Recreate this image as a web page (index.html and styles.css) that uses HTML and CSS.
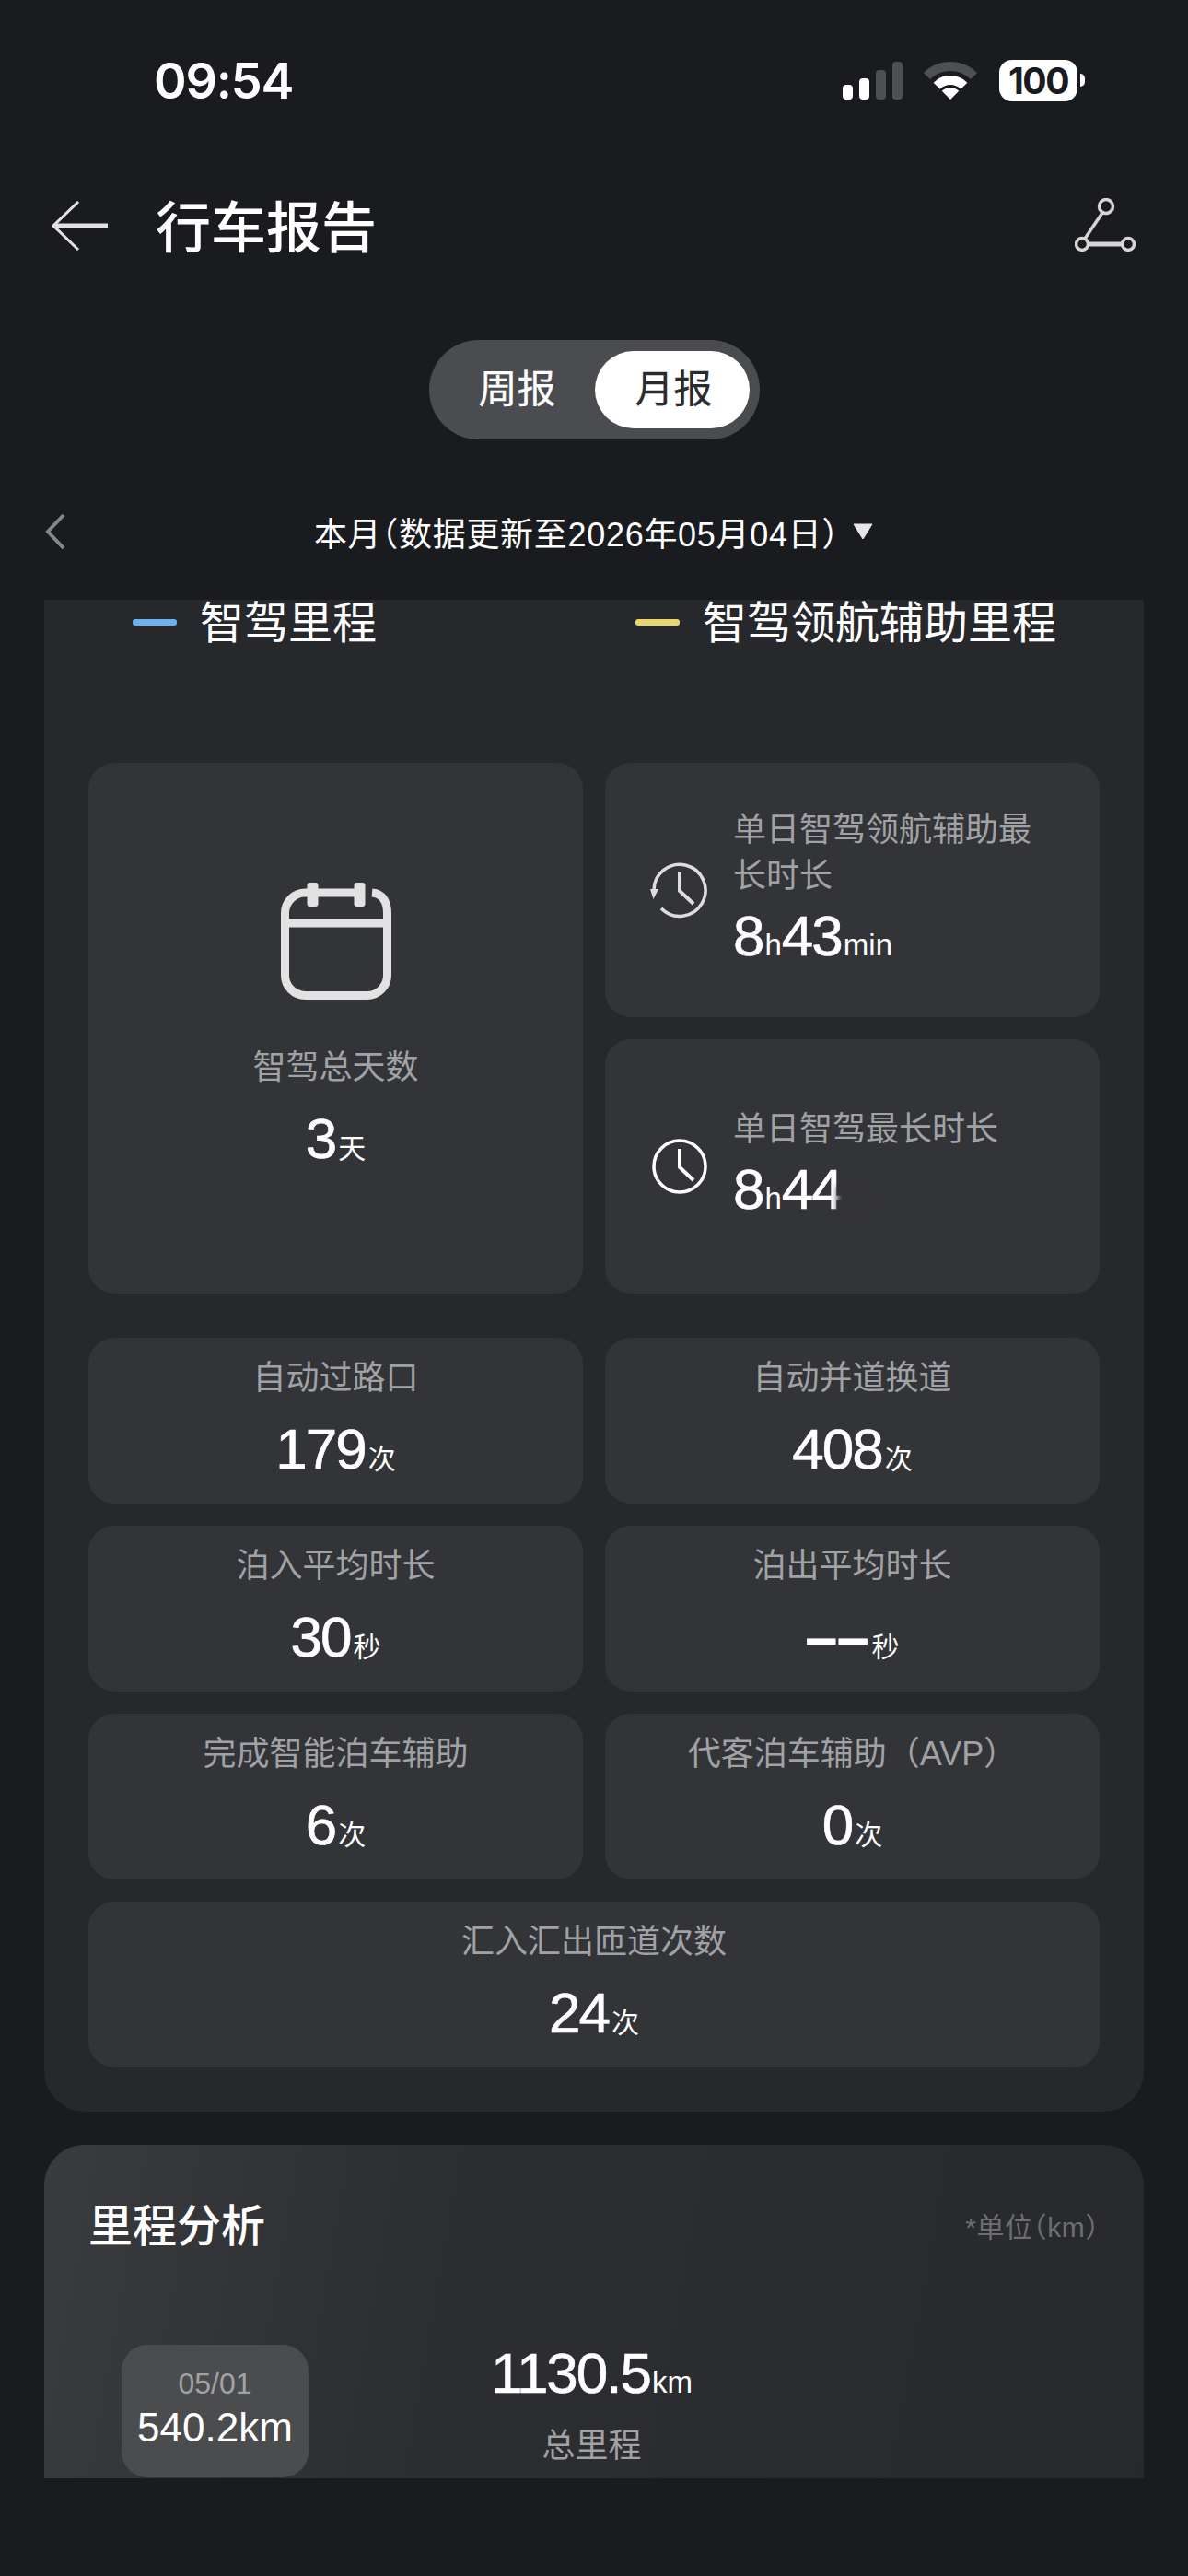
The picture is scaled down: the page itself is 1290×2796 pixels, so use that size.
FILE: index.html
```html
<!DOCTYPE html>
<html lang="zh-CN">

<head>
    <meta charset="UTF-8">
    <meta name="viewport" content="width=device-width, initial-scale=1.0">
    <title>行车报告</title>
    <link rel="stylesheet" href="styles.css">
</head>

<body>
    <!-- Status bar -->
    <div class="status-bar">
        <span class="time">09:54</span>
        <div class="status-icons">
            <div class="signal">
                <span class="bar bar-1"></span>
                <span class="bar bar-2"></span>
                <span class="bar bar-3"></span>
                <span class="bar bar-4"></span>
            </div>
            <svg class="wifi" viewBox="0 0 60 42" width="60" height="42">
                <path d="M4.5 16.5 A36 36 0 0 1 55.5 16.5" fill="none" stroke="#4f5054" stroke-width="10" />
                <path d="M15.2 27.2 A21 21 0 0 1 44.8 27.2" fill="none" stroke="#fff" stroke-width="10" />
                <path d="M30 42 L20.8 32.8 A13 13 0 0 1 39.2 32.8 Z" fill="#fff" />
            </svg>
            <div class="battery">
                <span class="battery-level">100</span>
                <span class="battery-cap"></span>
            </div>
        </div>
    </div>

    <!-- Nav -->
    <nav class="nav-bar">
        <svg class="back-icon" viewBox="0 0 62 54" width="62" height="54">
            <path d="M3 27 H61" stroke="#e2e2e2" stroke-width="5" fill="none" />
            <path d="M29 1 L2 27 L29 53" stroke="#e2e2e2" stroke-width="3" fill="none" />
        </svg>
        <h1 class="page-title">行车报告</h1>
        <svg class="route-icon" viewBox="0 0 66 60" width="66" height="60">
            <circle cx="34" cy="9" r="7.5" fill="none" stroke="#d6d6d6" stroke-width="3.5" />
            <circle cx="8" cy="50" r="6.5" fill="none" stroke="#d6d6d6" stroke-width="3.5" />
            <circle cx="58" cy="50" r="6.5" fill="none" stroke="#d6d6d6" stroke-width="3.5" />
            <path d="M30 16 L11 44" stroke="#d6d6d6" stroke-width="3.5" fill="none" />
            <path d="M15 50 H51" stroke="#d6d6d6" stroke-width="5" fill="none" />
        </svg>
    </nav>

    <!-- Week / month switch -->
    <div class="tabs">
        <span class="tab">周报</span>
        <span class="tab tab-active">月报</span>
    </div>

    <!-- Date row -->
    <div class="date-row">
        <svg class="date-prev" viewBox="0 0 24 40" width="24" height="40">
            <path d="M21 2 L4 20 L21 38" stroke="#85868a" stroke-width="4" fill="none" />
        </svg>
        <div class="date-picker">
            <span class="date-text">本月（数据更新至2026年05月04日）</span>
            <svg class="date-caret" viewBox="0 0 24 18" width="24" height="18">
                <path d="M2 1 H22 L12 17 Z" fill="#e6e6e6" stroke="#e6e6e6" stroke-width="1" stroke-linejoin="round" />
            </svg>
        </div>
    </div>

    <!-- Scrolling content -->
    <main class="content">
        <section class="card card-stats">
            <div class="legend">
                <div class="legend-item"><span class="legend-bar legend-blue"></span>智驾里程</div>
                <div class="legend-item"><span class="legend-bar legend-yellow"></span>智驾领航辅助里程</div>
            </div>

            <div class="summary-grid">
                <div class="tile tile-days">
                    <svg class="calendar-icon" viewBox="0 0 120 127" width="120" height="127">
                        <path d="M99 11 C110 12 115.5 20 115.5 33 V100 A22 22 0 0 1 93.5 122.5 H26.5 A22 22 0 0 1 4.5 100.5 V33 A22 22 0 0 1 26.5 11 H85" fill="none" stroke="#e2e2e2" stroke-width="9" />
                        <path d="M4.5 44 H115.5" stroke="#e2e2e2" stroke-width="9" fill="none" />
                        <rect x="28.5" y="0" width="12" height="26" rx="3" fill="#e2e2e2" />
                        <rect x="79.5" y="0" width="12" height="26" rx="3" fill="#e2e2e2" />
                    </svg>
                    <div class="tile-label">智驾总天数</div>
                    <div class="value">3<span class="unit">天</span></div>
                </div>

                <div class="tile tile-clock">
                    <svg class="clock-icon" viewBox="0 0 64 64" width="64" height="64">
                        <path d="M4 33 A28 28 0 1 1 12 52" fill="none" stroke="#dedede" stroke-width="3.5" />
                        <path d="M0 31 H9 L3.5 42 Z" fill="#dedede" />
                        <path d="M32 13 V33 L47 47" fill="none" stroke="#dedede" stroke-width="4" />
                    </svg>
                    <div class="clock-text">
                        <div class="tile-label">单日智驾领航辅助最长时长</div>
                        <div class="value">8<span class="unit unit-en">h</span>43<span class="unit unit-en">min</span></div>
                    </div>
                </div>

                <div class="tile tile-clock">
                    <svg class="clock-icon" viewBox="0 0 64 64" width="64" height="64">
                        <circle cx="32" cy="32" r="28" fill="none" stroke="#fff" stroke-width="3.5" />
                        <path d="M32 13 V33 L47 47" fill="none" stroke="#fff" stroke-width="4" />
                    </svg>
                    <div class="clock-text">
                        <div class="tile-label">单日智驾最长时长</div>
                        <div class="value">8<span class="unit unit-en">h</span>44</div>
                    </div>
                    <span class="smudge"></span>
                </div>
            </div>

            <div class="stats-grid">
                <div class="tile tile-stat">
                    <div class="tile-label">自动过路口</div>
                    <div class="value">179<span class="unit">次</span></div>
                </div>
                <div class="tile tile-stat">
                    <div class="tile-label">自动并道换道</div>
                    <div class="value">408<span class="unit">次</span></div>
                </div>
                <div class="tile tile-stat">
                    <div class="tile-label">泊入平均时长</div>
                    <div class="value">30<span class="unit">秒</span></div>
                </div>
                <div class="tile tile-stat">
                    <div class="tile-label">泊出平均时长</div>
                    <div class="value"><span class="dash">––</span><span class="unit">秒</span></div>
                </div>
                <div class="tile tile-stat">
                    <div class="tile-label">完成智能泊车辅助</div>
                    <div class="value">6<span class="unit">次</span></div>
                </div>
                <div class="tile tile-stat">
                    <div class="tile-label">代客泊车辅助（AVP）</div>
                    <div class="value">0<span class="unit">次</span></div>
                </div>
                <div class="tile tile-stat tile-wide">
                    <div class="tile-label">汇入汇出匝道次数</div>
                    <div class="value">24<span class="unit">次</span></div>
                </div>
            </div>
        </section>

        <section class="card card-mileage">
            <div class="mileage-head">
                <h2 class="card-title">里程分析</h2>
                <span class="mileage-note">*单位（km）</span>
            </div>
            <div class="mileage-body">
                <div class="day-pill">
                    <div class="day-date">05/01</div>
                    <div class="day-value">540.2km</div>
                </div>
                <div class="mileage-total">
                    <div class="value">1130.5<span class="unit unit-en">km</span></div>
                    <div class="tile-label">总里程</div>
                </div>
            </div>
        </section>
    </main>
</body>

</html>
```

FILE: styles.css
```css
/* Global Styles */

* {
    box-sizing: border-box;
    margin: 0;
    padding: 0;
}

body {
    width: 1290px;
    height: 2796px;
    overflow: hidden;
    background-color: #1a1b1f;
    color: #ffffff;
    font-family: "Liberation Sans", "Noto Sans CJK SC", sans-serif;
}

/* Status bar */

.status-bar {
    height: 174px;
    padding: 0 112px 0 167px;
    display: flex;
    align-items: center;
    justify-content: space-between;
}

.time {
    font-family: Inter, sans-serif;
    font-size: 54px;
    font-weight: 600;
    letter-spacing: -1.2px;
}

.status-icons {
    display: flex;
    align-items: center;
}

.signal {
    display: flex;
    align-items: flex-end;
    gap: 7px;
    height: 41px;
}

.bar {
    width: 11px;
    border-radius: 4px;
    background-color: #ffffff;
}

.bar-1 {
    height: 16px;
}

.bar-2 {
    height: 23px;
}

.bar-3 {
    height: 32px;
    background-color: #4f5054;
}

.bar-4 {
    height: 41px;
    background-color: #4f5054;
}

.wifi {
    margin-left: 22px;
}

.battery {
    display: flex;
    align-items: center;
    margin-left: 23px;
}

.battery-level {
    width: 85px;
    height: 45px;
    border-radius: 14px;
    background-color: #ffffff;
    color: #1a1b1f;
    font-family: Inter, sans-serif;
    font-size: 39px;
    font-weight: 700;
    line-height: 45px;
    letter-spacing: -1.5px;
    text-align: center;
}

.battery-cap {
    width: 5px;
    height: 14px;
    margin-left: 3px;
    border-radius: 0 5px 5px 0;
    background-color: #ffffff;
}

/* Nav */

.nav-bar {
    height: 142px;
    padding: 0 57px 0 56px;
    display: flex;
    align-items: center;
}

.page-title {
    margin: 0 0 6px 51px;
    font-size: 60px;
    font-weight: 500;
}

.route-icon {
    margin-left: auto;
}

/* Tabs */

.tabs {
    width: 359px;
    height: 108px;
    margin: 53px auto 0;
    padding: 12px 11px 12px 0;
    display: flex;
    justify-content: flex-end;
    border-radius: 54px;
    background-color: #4b4c4f;
}

.tab {
    width: 168px;
    border-radius: 42px;
    font-size: 42px;
    line-height: 84px;
    text-align: center;
    -webkit-text-stroke: 0.3px currentColor;
}

.tab-active {
    padding-left: 4px;
    background-color: #ffffff;
    color: #2a2b2f;
}

/* Date row */

.date-row {
    height: 66px;
    margin-top: 67px;
    display: grid;
    grid-template-columns: 1fr auto 1fr;
    align-items: center;
}

.date-prev {
    margin-left: 48px;
}

.date-picker {
    display: flex;
    align-items: center;
    gap: 14px;
}

.date-text {
    font-size: 36px;
    letter-spacing: 0.7px;
    font-feature-settings: "halt";
}

/* Content */

.content {
    margin: 41px 48px 0;
}

.card {
    background-color: #27282c;
}

.card-stats {
    padding: 0 48px 48px;
    border-radius: 0 0 44px 44px;
}

.legend {
    display: flex;
    margin: 0 -48px 127px 48px;
    padding-top: 2px;
}

.legend-item {
    width: 546px;
    display: flex;
    align-items: center;
    gap: 25px;
    font-size: 48px;
    line-height: 48px;
}

.legend-bar {
    width: 48px;
    height: 7px;
    margin-top: -3px;
    border-radius: 3px;
}

.legend-blue {
    background-color: #6cb2f0;
}

.legend-yellow {
    background-color: #e8d76c;
}

/* Tiles */

.tile {
    border-radius: 28px;
    background-color: #333438;
}

.tile-label {
    color: #a1a2a5;
    font-size: 36px;
    line-height: 50px;
}

.value {
    font-size: 62px;
    line-height: 70px;
    letter-spacing: -2px;
    white-space: nowrap;
    -webkit-text-stroke: 0.6px #ffffff;
}

.unit {
    margin-left: 3px;
    font-size: 30px;
    letter-spacing: 0;
    -webkit-text-stroke: 0;
}

.unit-en {
    margin-left: 2px;
    font-size: 33px;
}

.summary-grid {
    display: grid;
    grid-template-columns: 1fr 1fr;
    grid-template-rows: 276px 276px;
    gap: 24px;
}

.tile-days {
    grid-row: span 2;
    padding-top: 130px;
    display: flex;
    flex-direction: column;
    align-items: center;
}

.calendar-icon {
    margin-bottom: 49px;
}

.tile-days .value {
    margin-top: 17px;
}

.tile-clock {
    position: relative;
    padding-left: 49px;
    display: flex;
    align-items: center;
    gap: 26px;
}

.clock-icon {
    flex: none;
}

.clock-text {
    width: 340px;
}

.clock-text .value {
    margin: 5px 0 -5px;
}

/* covers the blurred part of the reading */
.smudge {
    position: absolute;
    left: 252px;
    top: 160px;
    width: 44px;
    height: 30px;
    background-color: #333438;
    filter: blur(3px);
}

.stats-grid {
    margin-top: 48px;
    display: grid;
    grid-template-columns: 1fr 1fr;
    grid-auto-rows: 180px;
    gap: 24px;
}

.tile-stat {
    padding-top: 19px;
    text-align: center;
}

.tile-stat .value {
    margin-top: 17px;
}

.tile-wide {
    grid-column: span 2;
}

.dash {
    font-weight: bold;
    letter-spacing: 0;
}

/* Mileage */

.card-mileage {
    height: 362px;
    margin-top: 36px;
    padding: 59px 48px 0;
    border-radius: 44px 44px 0 0;
    background: linear-gradient(100deg, #393b3f 0%, #2d2e32 35%, #28292d 100%);
}

.mileage-head {
    display: flex;
    align-items: center;
    justify-content: space-between;
}

.card-title {
    font-size: 48px;
    font-weight: 500;
    line-height: 60px;
}

.mileage-note {
    margin-bottom: 4px;
    color: #6d6e72;
    font-size: 30px;
    letter-spacing: 0.6px;
    font-feature-settings: "halt";
}

.mileage-body {
    margin-top: 98px;
    padding-left: 36px;
    display: flex;
}

.day-pill {
    width: 203px;
    height: 144px;
    padding-top: 20px;
    border-radius: 28px;
    background-color: #4b4c4e;
    text-align: center;
}

.day-date {
    color: #a1a2a5;
    font-size: 32px;
    line-height: 44px;
}

.day-value {
    font-size: 44px;
    line-height: 52px;
}

.mileage-total {
    margin: -4px auto 0 198px;
    text-align: center;
}

.mileage-total .tile-label {
    margin-top: 9px;
}
```
